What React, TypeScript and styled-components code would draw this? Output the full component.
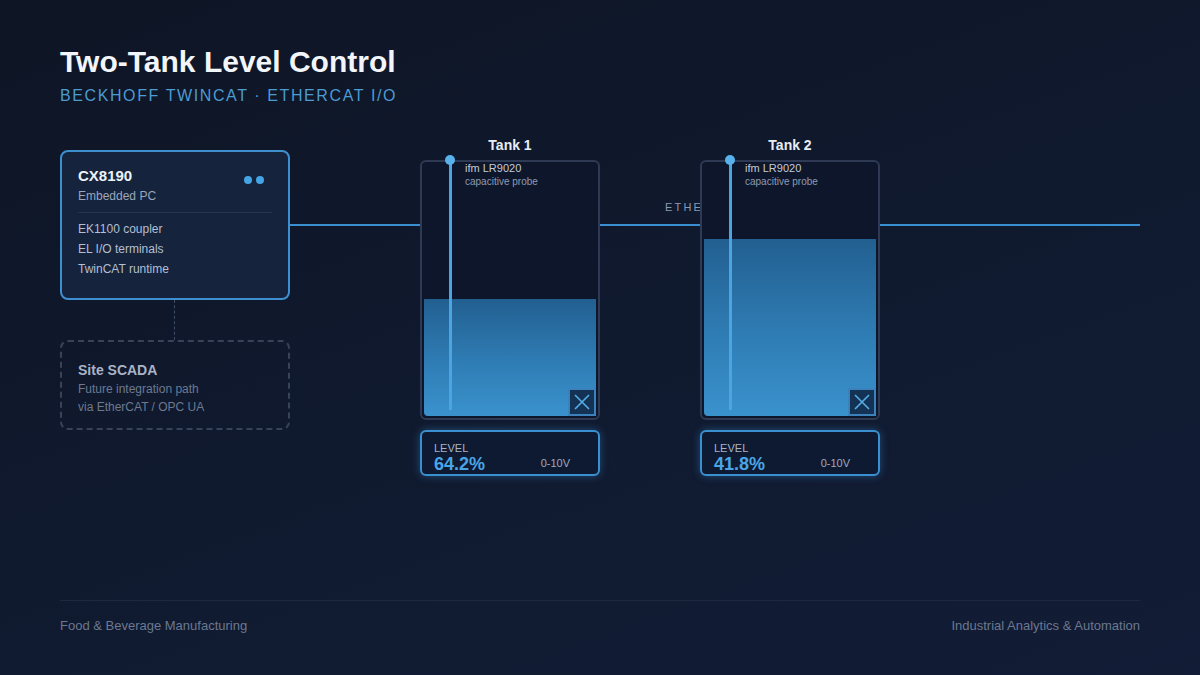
import React from "react";
import styled, { createGlobalStyle } from "styled-components";

const Global = createGlobalStyle`
  html, body { margin: 0; padding: 0; background: #0f1628; }
  * { box-sizing: border-box; }
`;

const Page = styled.div`
  width: 1200px;
  height: 675px;
  padding: 44px 60px 0;
  display: flex;
  flex-direction: column;
  font-family: "Liberation Sans", Arial, sans-serif;
  background: linear-gradient(160deg, #0e1525 0%, #101a2f 55%, #121c36 100%);
  overflow: hidden;
`;

const Title = styled.h1`
  margin: 0;
  font-size: 30px;
  line-height: 36px;
  font-weight: 700;
  color: #f2f5fa;
`;

const Subtitle = styled.div`
  margin-top: 6px;
  font-size: 16px;
  line-height: 20px;
  letter-spacing: 1.6px;
  color: #4c9bd2;
`;

const Diagram = styled.div`
  position: relative;
  margin-top: 29px;
  display: flex;
  align-items: flex-start;
  height: 345px;
`;

const Bus = styled.div`
  position: absolute;
  left: 230px;
  right: 0;
  top: 89px;
  height: 2px;
  background: #3a8fd0;
`;

const BusLabel = styled.div`
  position: absolute;
  left: 605px;
  top: 66px;
  font-size: 11px;
  letter-spacing: 2.2px;
  color: #8a9ab2;
`;

const LeftCol = styled.div`
  width: 230px;
  margin-top: 15px;
  display: flex;
  flex-direction: column;
  align-items: stretch;
`;

const PcCard = styled.div`
  position: relative;
  z-index: 1;
  height: 150px;
  border: 2px solid #3d8fcf;
  border-radius: 8px;
  background: #15233d;
  padding: 14px 16px 0;
`;

const CardHead = styled.div`
  display: flex;
  justify-content: space-between;
  align-items: flex-start;
`;

const CardTitle = styled.div`
  font-size: 15px;
  line-height: 20px;
  font-weight: 700;
  color: #eef2f8;
`;

const CardSub = styled.div`
  margin-top: 2px;
  font-size: 12px;
  line-height: 16px;
  color: #9aa6ba;
`;

const Dots = styled.div`
  display: flex;
  gap: 4px;
  margin-top: 10px;
  margin-right: 8px;
`;

const Dot = styled.span`
  width: 8px;
  height: 8px;
  border-radius: 50%;
  background: #45a4e4;
`;

const Divider = styled.div`
  height: 1px;
  background: #26354f;
  margin: 8px 0 6px;
`;

const Item = styled.div`
  font-size: 12px;
  line-height: 20px;
  color: #b4bfd0;
`;

const DashLink = styled.div`
  width: 0;
  height: 40px;
  margin-left: 114px;
  border-left: 1.5px dashed #3e4d68;
`;

const ScadaCard = styled.div`
  height: 90px;
  border: 2px dashed #364359;
  border-radius: 8px;
  padding: 18px 16px 0;
`;

const ScadaTitle = styled.div`
  font-size: 14px;
  line-height: 20px;
  font-weight: 700;
  color: #a9b3c5;
`;

const ScadaText = styled.div`
  font-size: 12px;
  line-height: 18px;
  color: #6c7990;
`;

const TankCol = styled.div<{ $offset: number }>`
  position: relative;
  z-index: 1;
  width: 180px;
  margin-left: ${(p) => p.$offset}px;
  display: flex;
  flex-direction: column;
`;

const TankLabel = styled.div`
  text-align: center;
  font-size: 14px;
  line-height: 20px;
  font-weight: 700;
  color: #e8edf5;
  margin-bottom: 5px;
`;

const Tank = styled.div`
  position: relative;
  height: 260px;
  border: 2px solid #2e3a53;
  border-radius: 6px;
  background: #0e162b;
  padding: 2px;
  display: flex;
  flex-direction: column;
  justify-content: flex-end;
`;

const Liquid = styled.div`
  border-radius: 0 0 4px 4px;
  background: linear-gradient(180deg, #225f90 0%, #2f7db5 55%, #3a92cd 100%);
`;

const Probe = styled.div`
  position: absolute;
  left: 26.5px;
  top: -2px;
  width: 3px;
  height: 250px;
  background: #4ba5e3;
  &::before {
    content: "";
    position: absolute;
    left: -3.5px;
    top: -5px;
    width: 10px;
    height: 10px;
    border-radius: 50%;
    background: #59b1ec;
  }
`;

const ProbeLabel = styled.div`
  position: absolute;
  left: 43px;
  top: 0px;
`;

const ProbeName = styled.div`
  font-size: 11px;
  line-height: 13px;
  color: #c3cbd9;
`;

const ProbeType = styled.div`
  font-size: 10px;
  line-height: 14px;
  color: #8f9bb0;
`;

const Valve = styled.div`
  position: absolute;
  right: 2px;
  bottom: 2px;
  width: 28px;
  height: 28px;
  border: 2px solid #3b82bd;
  background: #143253;
  display: flex;
  align-items: center;
  justify-content: center;
`;

const LevelBox = styled.div`
  margin-top: 10px;
  height: 46px;
  border: 2px solid #3a8fd0;
  border-radius: 6px;
  background: #0e1a31;
  box-shadow: 0 0 8px rgba(58, 143, 208, 0.45);
  padding: 7px 12px 0;
  display: flex;
  align-items: flex-end;
  justify-content: space-between;
`;

const LevelLeft = styled.div`
  display: flex;
  flex-direction: column;
`;

const LevelCaption = styled.div`
  font-size: 11px;
  line-height: 12px;
  color: #a9b4c7;
`;

const LevelValue = styled.div`
  font-size: 18px;
  line-height: 20px;
  font-weight: 700;
  color: #4aa5e6;
`;

const Range = styled.div`
  font-size: 11px;
  line-height: 14px;
  color: #9fabbf;
  margin-right: 16px;
  margin-bottom: 4px;
`;

const Footer = styled.div`
  margin-top: auto;
  margin-bottom: 41px;
  border-top: 1.5px solid #1d2940;
  padding-top: 17px;
  display: flex;
  justify-content: space-between;
  font-size: 13px;
  line-height: 16px;
  color: #6b788f;
`;

const tanks = [
  { name: "Tank 1", level: "64.2%", fill: 0.464, offset: 130 },
  { name: "Tank 2", level: "41.8%", fill: 0.704, offset: 100 },
];

const ValveIcon = () => (
  <svg width="18" height="18" viewBox="0 0 18 18">
    <path d="M2 2 L16 16 M16 2 L2 16" stroke="#55aee8" strokeWidth="1.6" fill="none" />
  </svg>
);

export default function App() {
  return (
    <>
      <Global />
      <Page>
        <Title>Two-Tank Level Control</Title>
        <Subtitle>BECKHOFF TWINCAT · ETHERCAT I/O</Subtitle>
        <Diagram>
          <Bus />
          <BusLabel>ETHERCAT</BusLabel>
          <LeftCol>
            <PcCard>
              <CardHead>
                <div>
                  <CardTitle>CX8190</CardTitle>
                  <CardSub>Embedded PC</CardSub>
                </div>
                <Dots>
                  <Dot />
                  <Dot />
                </Dots>
              </CardHead>
              <Divider />
              <Item>EK1100 coupler</Item>
              <Item>EL I/O terminals</Item>
              <Item>TwinCAT runtime</Item>
            </PcCard>
            <DashLink />
            <ScadaCard>
              <ScadaTitle>Site SCADA</ScadaTitle>
              <ScadaText>Future integration path</ScadaText>
              <ScadaText>via EtherCAT / OPC UA</ScadaText>
            </ScadaCard>
          </LeftCol>
          {tanks.map((t) => (
            <TankCol key={t.name} $offset={t.offset}>
              <TankLabel>{t.name}</TankLabel>
              <Tank>
                <Liquid style={{ height: `${Math.round(t.fill * 252)}px` }} />
                <Probe />
                <ProbeLabel>
                  <ProbeName>ifm LR9020</ProbeName>
                  <ProbeType>capacitive probe</ProbeType>
                </ProbeLabel>
                <Valve>
                  <ValveIcon />
                </Valve>
              </Tank>
              <LevelBox>
                <LevelLeft>
                  <LevelCaption>LEVEL</LevelCaption>
                  <LevelValue>{t.level}</LevelValue>
                </LevelLeft>
                <Range>0-10V</Range>
              </LevelBox>
            </TankCol>
          ))}
        </Diagram>
        <Footer>
          <span>Food &amp; Beverage Manufacturing</span>
          <span>Industrial Analytics &amp; Automation</span>
        </Footer>
      </Page>
    </>
  );
}
